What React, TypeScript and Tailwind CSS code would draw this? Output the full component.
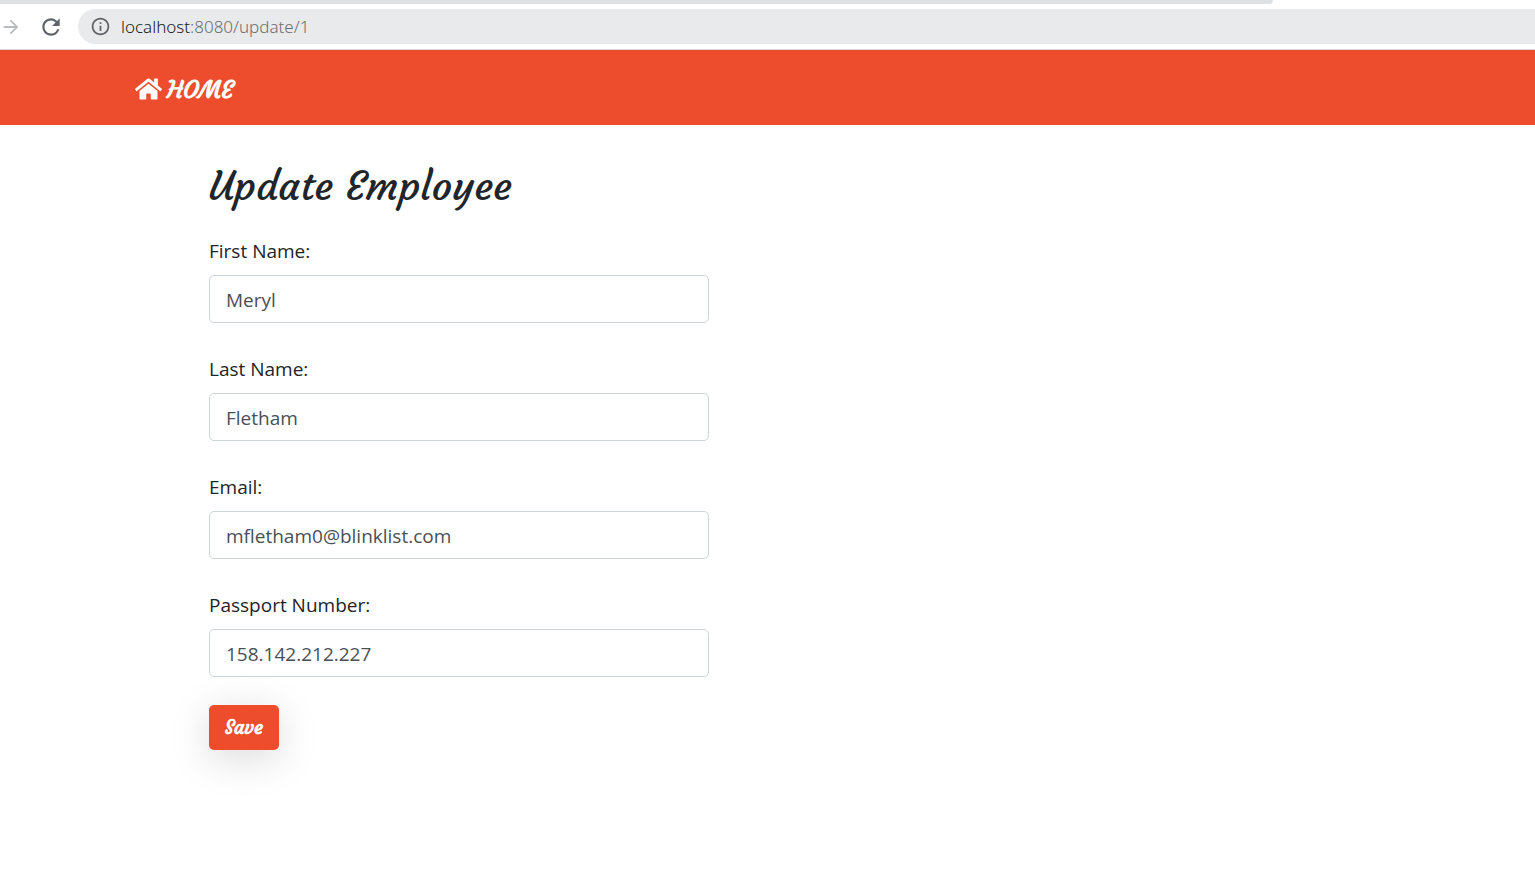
import React from "react";
import { FaHome } from "react-icons/fa";
import { MdArrowForward, MdInfoOutline, MdRefresh } from "react-icons/md";

const fields = [
  { id: "firstName", label: "First Name:", value: "Meryl", type: "text" },
  { id: "lastName", label: "Last Name:", value: "Fletham", type: "text" },
  { id: "email", label: "Email:", value: "mfletham0@blinklist.com", type: "email" },
  { id: "passport", label: "Passport Number:", value: "158.142.212.227", type: "text" },
];

function BrowserBar() {
  return (
    <div className="border-b border-[#d5d7da] bg-white">
      <div className="mr-[262px] h-1 rounded-br-lg bg-[#dee1e6]" />
      <div className="flex items-center pt-[5px] pb-[5px]">
        <button type="button" aria-label="Forward" className="text-[#babcbe]">
          <MdArrowForward className="size-[22px]" />
        </button>
        <button type="button" aria-label="Reload" className="ml-4 text-[#5f6368]">
          <MdRefresh className="size-[26px]" />
        </button>
        <div className="ml-[14px] flex h-[35px] flex-1 items-center rounded-l-full bg-[#e9eaeb] pl-3 text-[17px] text-[#6b6e72]">
          <MdInfoOutline className="size-[21px] text-[#5f6368]" />
          <span className="ml-[10px] font-['Noto_Sans',sans-serif] font-light whitespace-nowrap">
            <span className="text-[#202124]">localhost</span>:8080/update/1
          </span>
        </div>
      </div>
    </div>
  );
}

export default function App() {
  return (
    <div className="min-h-screen bg-white font-['Open_Sans',sans-serif] text-[#212529]">
      <BrowserBar />
      <nav className="flex h-[75px] items-center bg-[#ee4d2d] px-[135px] pt-1">
        <a
          href="/"
          className="flex items-center gap-[5px] font-['Courgette','Lato',sans-serif] text-[24px] font-bold text-white"
        >
          <FaHome className="mb-0.5 h-6 w-[27px]" />
          HOME
        </a>
      </nav>
      <main className="px-[209px] pt-[31px]">
        <h1 className="font-['Courgette','Lato',sans-serif] text-[40px] leading-[60px] font-medium">
          Update Employee
        </h1>
        <form className="mt-5 max-w-[500px]" onSubmit={(e) => e.preventDefault()}>
          <div className="flex flex-col gap-[31px]">
            {fields.map((field) => (
              <div key={field.id}>
                <label htmlFor={field.id} className="mb-[9px] block text-[19px] leading-[30px]">
                  {field.label}
                </label>
                <input
                  id={field.id}
                  type={field.type}
                  defaultValue={field.value}
                  className="block h-12 w-full rounded-[5px] border border-[#ced4da] bg-white px-4 pt-px text-[19px] text-[#495057] outline-none"
                />
              </div>
            ))}
          </div>
          <button
            type="submit"
            className="mt-7 h-[45px] w-[70px] rounded-[5px] bg-[#ee4d2d] font-['Courgette','Lato',sans-serif] text-[19px] font-bold text-white shadow-[0_8px_40px_rgba(0,0,0,0.15)]"
          >
            Save
          </button>
        </form>
      </main>
    </div>
  );
}
